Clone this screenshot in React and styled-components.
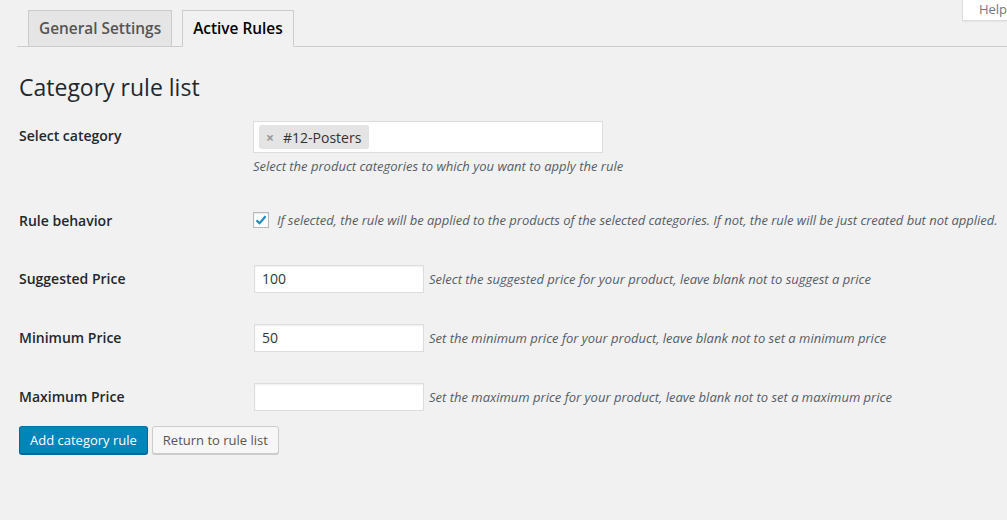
import styled, { createGlobalStyle } from 'styled-components';

const GlobalStyle = createGlobalStyle`
  html, body {
    margin: 0;
    padding: 0;
    background: #f1f1f1;
    font-family: "Open Sans", "Liberation Sans", sans-serif;
    color: #444;
  }
`;

const Page = styled.div`
  position: relative;
  width: 1007px;
  height: 520px;
  overflow: hidden;
  background: #f1f1f1;
`;

const HelpTab = styled.div`
  position: absolute;
  top: 0;
  right: -30px;
  height: 20px;
  padding: 0 30px 0 16px;
  background: #fff;
  border-left: 1px solid #ddd;
  border-bottom: 1px solid #ddd;
  box-shadow: 0 1px 1px rgba(0, 0, 0, 0.04);
  font-size: 13px;
  line-height: 18px;
  color: #72777c;
`;

const TabBar = styled.nav`
  display: flex;
  align-items: flex-end;
  gap: 10px;
  margin-left: 17px;
  padding: 10px 0 0 11px;
  border-bottom: 1px solid #ccc;
`;

const Tab = styled.div`
  padding: 5px 10px;
  margin-bottom: -1px;
  font-size: 15.4px;
  line-height: 25px;
  font-weight: 600;
  border: 1px solid #ccc;
  border-bottom-color: ${(p) => (p.$active ? '#f1f1f1' : '#ccc')};
  background: ${(p) => (p.$active ? '#f1f1f1' : '#e5e5e5')};
  color: ${(p) => (p.$active ? '#000' : '#555')};
`;

const Content = styled.div`
  padding-left: 19px;
`;

const Title = styled.h1`
  margin: 26px 0 0;
  font-size: 23px;
  line-height: 29px;
  font-weight: 400;
  color: #23282d;
`;

const Row = styled.div`
  display: grid;
  grid-template-columns: 234px 1fr;
  align-items: start;
  margin-top: ${(p) => p.$top}px;
`;

const Label = styled.div`
  padding-top: ${(p) => p.$pad}px;
  font-size: 14px;
  line-height: 20px;
  font-weight: 600;
  color: #23282d;
`;

const Field = styled.div`
  display: flex;
  flex-direction: ${(p) => (p.$column ? 'column' : 'row')};
  align-items: ${(p) => (p.$column ? 'flex-start' : 'center')};
`;

const SelectBox = styled.div`
  box-sizing: border-box;
  width: 350px;
  height: 32px;
  padding: 3px 5px;
  display: flex;
  align-items: center;
  background: #fff;
  border: 1px solid #ddd;
`;

const Choice = styled.span`
  display: inline-flex;
  align-items: center;
  gap: 9px;
  height: 24px;
  padding: 0 8px 0 7px;
  background: #e4e4e4;
  border-radius: 3px;
  font-size: 14px;
  color: #333;
`;

const Remove = styled.span`
  font-size: 14px;
  font-weight: 700;
  color: #999;
`;

const Desc = styled.span`
  font-size: 13px;
  line-height: 18px;
  font-style: italic;
  color: #555d66;
  letter-spacing: ${(p) => (p.$tight ? '-0.03px' : '0')};
  margin: ${(p) => p.$margin || '0'};
`;

const Check = styled.span`
  box-sizing: border-box;
  width: 16px;
  height: 16px;
  margin-right: 8px;
  display: inline-flex;
  align-items: center;
  justify-content: center;
  background: #fff;
  border: 1px solid #b4b9be;
  box-shadow: inset 0 1px 2px rgba(0, 0, 0, 0.1);
`;

const PriceInput = styled.div`
  box-sizing: border-box;
  width: 170px;
  height: 28px;
  padding: 0 7px;
  margin-left: 1px;
  background: #fff;
  border: 1px solid #ddd;
  box-shadow: inset 0 1px 2px rgba(0, 0, 0, 0.07);
  font-size: 14px;
  line-height: 26px;
  color: #32373c;
`;

const Actions = styled.div`
  display: flex;
  gap: 4px;
  margin-top: 15px;
`;

const Button = styled.button`
  box-sizing: border-box;
  height: 28px;
  padding: 0 10px 1px;
  font-family: inherit;
  font-size: 13px;
  line-height: 26px;
  border-radius: 3px;
  border-width: 1px;
  border-style: solid;
  border-color: ${(p) => (p.$primary ? '#0073aa #006799 #006799' : '#ccc')};
  background: ${(p) => (p.$primary ? '#0085ba' : '#f7f7f7')};
  color: ${(p) => (p.$primary ? '#fff' : '#555')};
  box-shadow: ${(p) => (p.$primary ? '0 1px 0 #006799' : '0 1px 0 #ccc')};
`;

const prices = [
  { label: 'Minimum Price', value: '50', desc: 'Set the minimum price for your product, leave blank not to set a minimum price' },
  { label: 'Maximum Price', value: '', desc: 'Set the maximum price for your product, leave blank not to set a maximum price' },
];

export default function App() {
  return (
    <Page>
      <GlobalStyle />
      <HelpTab>Help</HelpTab>
      <TabBar>
        <Tab>General Settings</Tab>
        <Tab $active>Active Rules</Tab>
      </TabBar>
      <Content>
        <Title>Category rule list</Title>

        <Row $top={19}>
          <Label $pad={5}>Select category</Label>
          <Field $column>
            <SelectBox>
              <Choice>
                <Remove>×</Remove>#12-Posters
              </Choice>
            </SelectBox>
            <Desc $margin="4px 0 0">Select the product categories to which you want to apply the rule</Desc>
          </Field>
        </Row>

        <Row $top={36}>
          <Label $pad={-2}>Rule behavior</Label>
          <Field>
            <Check>
              <svg width="14" height="14" viewBox="0 0 14 14">
                <path d="M2.5 7.2 L5.6 10.2 L11.6 3.2" fill="none" stroke="#1e8cbe" strokeWidth="2.2" />
              </svg>
            </Check>
            <Desc $tight>
              If selected, the rule will be applied to the products of the selected categories. If not, the rule will be just created but not applied.
            </Desc>
          </Field>
        </Row>

        <Row $top={34}>
          <Label $pad={4}>Suggested Price</Label>
          <Field>
            <PriceInput>100</PriceInput>
            <Desc $margin="0 0 0 5px">Select the suggested price for your product, leave blank not to suggest a price</Desc>
          </Field>
        </Row>

        {prices.map((p) => (
          <Row $top={31} key={p.label}>
            <Label $pad={4}>{p.label}</Label>
            <Field>
              <PriceInput>{p.value}</PriceInput>
              <Desc $margin="0 0 0 5px">{p.desc}</Desc>
            </Field>
          </Row>
        ))}

        <Actions>
          <Button $primary>Add category rule</Button>
          <Button>Return to rule list</Button>
        </Actions>
      </Content>
    </Page>
  );
}
